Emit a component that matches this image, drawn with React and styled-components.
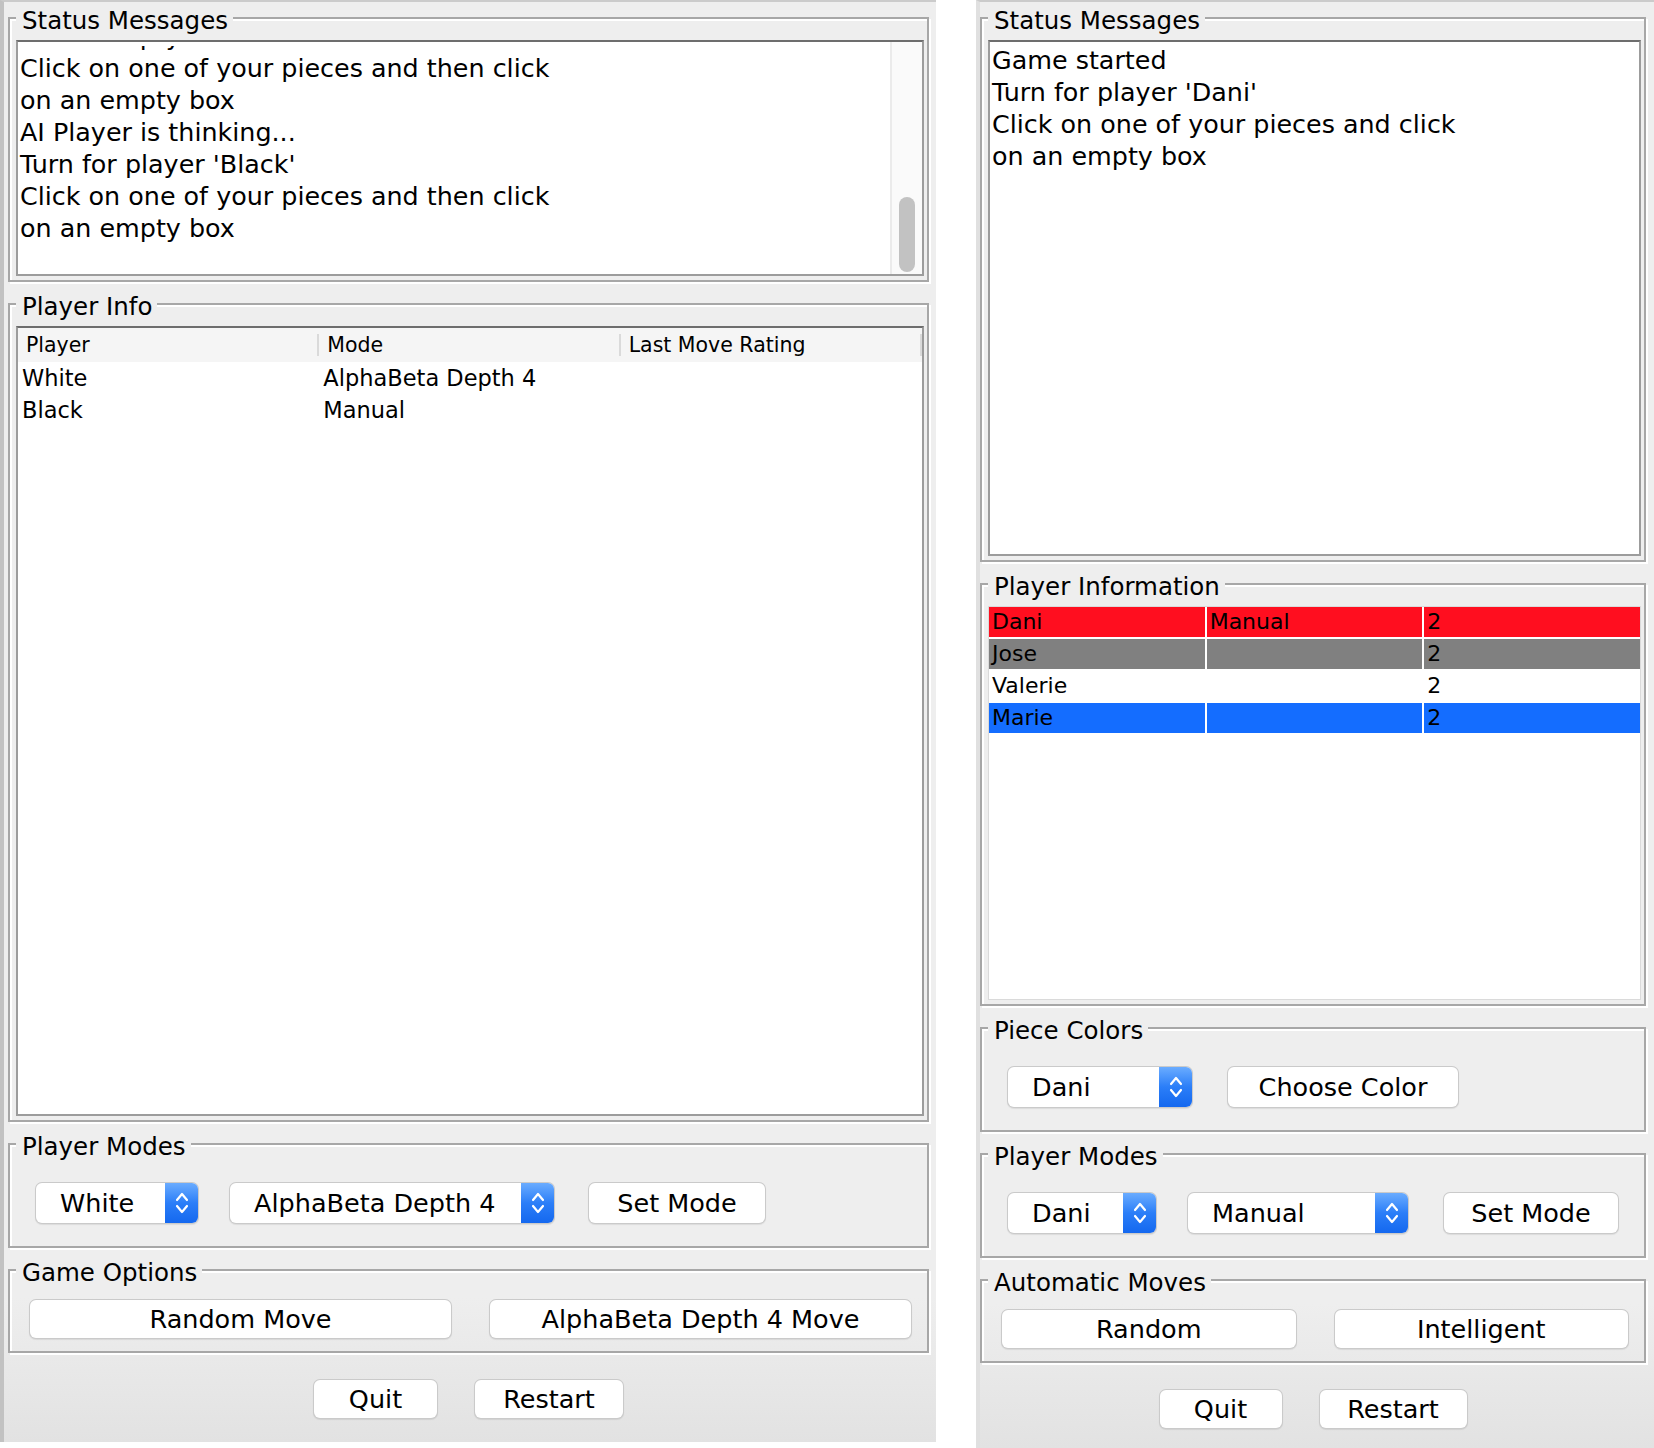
import React from "react";
import styled, { createGlobalStyle } from "styled-components";

const GlobalStyle = createGlobalStyle`
  * { box-sizing: border-box; }
  body {
    margin: 0;
    background: #ffffff;
    font-family: "DejaVu Sans", "Liberation Sans", sans-serif;
    color: #000;
  }
`;

const Screen = styled.div`
  display: flex;
  align-items: flex-start;
  gap: 40px;
  width: 1654px;
`;

const Window = styled.div`
  display: flex;
  flex-direction: column;
  gap: 6px;
  width: ${(p) => p.$w}px;
  height: ${(p) => p.$h}px;
  padding: 0 ${(p) => p.$pr}px 0 ${(p) => p.$pl}px;
  border-top: 2px solid #cbcbcb;
  border-left: 4px solid ${(p) => p.$edge};
  background: linear-gradient(#eeeeee 0%, #eeeeee 90%, #e2e2e2 100%);
`;

const Group = styled.fieldset`
  margin: 0;
  min-width: 0;
  padding: 6px 3px 4px 6px;
  border: 2px solid #a7a7a7;
  box-shadow: inset 2px 2px 0 #ffffff, 2px 2px 0 #ffffff;
`;

const Legend = styled.legend`
  margin: 0;
  padding: 6px 5px 0 6px;
  font-size: 24.5px;
  line-height: 26px;
  background: #eeeeee;
`;

const TextPane = styled.div`
  display: flex;
  height: ${(p) => p.$h}px;
  background: #ffffff;
  border: 2px solid #9c9c9c;
  border-top-color: #6d6d6d;
  overflow: hidden;
`;

/* viewport of the scrolled message list; starts a little below the frame */
const MessageClip = styled.div`
  flex: 1;
  margin-top: ${(p) => p.$inset}px;
  overflow: hidden;
`;

const Messages = styled.div`
  margin-top: ${(p) => p.$offset}px;
  padding: 1px 0 0 2px;
  font-size: 25.4px;
  line-height: 32px;
  white-space: pre;
`;

const ScrollTrack = styled.div`
  width: 32px;
  display: flex;
  flex-direction: column;
  justify-content: flex-end;
  align-items: center;
  padding: 2px 0;
  background: #fafafa;
  border-left: 2px solid #ebebeb;
`;

const ScrollThumb = styled.div`
  width: 16px;
  height: 75px;
  border-radius: 8px;
  background: #c2c2c2;
`;

const TablePane = styled.div`
  height: ${(p) => p.$h}px;
  background: #ffffff;
  border: ${(p) => (p.$light ? "1px solid #dadada" : "2px solid #9c9c9c")};
  border-top-color: ${(p) => (p.$light ? "#dadada" : "#6d6d6d")};
  overflow: hidden;
`;

const HeaderRow = styled.div`
  display: grid;
  grid-template-columns: repeat(3, 1fr);
  height: 34px;
  background: #f5f5f5;
`;

const HeaderCell = styled.div`
  display: flex;
  align-items: center;
  padding-left: 8px;
  font-size: 20.5px;
`;

const HeaderDivider = styled.span`
  margin-left: auto;
  width: 2px;
  height: 22px;
  background: #dadada;
`;

const InfoRow = styled.div`
  display: grid;
  grid-template-columns: repeat(3, 1fr);
  height: 32px;
  font-size: 22.5px;
  line-height: 32px;
`;

const InfoCell = styled.div`
  padding-left: 4px;
  white-space: nowrap;
`;

const ColorGrid = styled.div`
  display: grid;
  grid-template-columns: repeat(3, 1fr);
  gap: 2px;
`;

const ColorCell = styled.div`
  height: 30px;
  padding-left: 3px;
  font-size: 22px;
  line-height: 30px;
  background: ${(p) => p.$bg};
`;

const ControlRow = styled.div`
  display: flex;
  align-items: center;
  gap: 32px;
  padding: 17px 0 19px 20px;
`;

const ButtonGrid = styled.div`
  display: grid;
  grid-template-columns: 1fr 1fr;
  column-gap: 39px;
  padding: 8px 13px 9px 14px;
`;

const Footer = styled.div`
  display: flex;
  justify-content: center;
  gap: 38px;
  padding-top: 21px;
`;

const Combo = styled.div`
  display: flex;
  width: ${(p) => p.$w}px;
  height: 40px;
  border-radius: 6px;
  background: #ffffff;
  box-shadow: 0 0 0 1px #cacaca, 0 1px 1px 1px rgba(0, 0, 0, 0.08);
  overflow: hidden;
  font-size: 25.5px;
`;

const ComboText = styled.div`
  flex: 1;
  display: flex;
  align-items: center;
  padding-left: 24px;
  white-space: nowrap;
`;

const ComboArrow = styled.div`
  width: 33px;
  display: flex;
  align-items: center;
  justify-content: center;
  background: linear-gradient(#6aacff 0%, #2b7ef8 50%, #1468ef 100%);
`;

const Button = styled.button`
  width: ${(p) => (p.$w ? `${p.$w}px` : "auto")};
  height: ${(p) => p.$h}px;
  margin-left: ${(p) => p.$ml || 0}px;
  padding: 0;
  border: none;
  border-radius: 6px;
  background: #ffffff;
  box-shadow: 0 0 0 1px #cacaca, 0 1px 1px 1px rgba(0, 0, 0, 0.08);
  font-family: inherit;
  font-size: 25.5px;
  color: #000;
  white-space: nowrap;
`;

const Chevrons = () => (
  <svg width="14" height="26" viewBox="0 0 14 26" fill="none" stroke="#fff" strokeWidth="2.2" strokeLinecap="round" strokeLinejoin="round">
    <path d="M2 10 L7 4 L12 10" />
    <path d="M2 16 L7 22 L12 16" />
  </svg>
);

const ComboBox = ({ w, value }) => (
  <Combo $w={w}>
    <ComboText>{value}</ComboText>
    <ComboArrow>
      <Chevrons />
    </ComboArrow>
  </Combo>
);

const leftMessages = [
  "on an empty box",
  "Click on one of your pieces and then click",
  "on an empty box",
  "AI Player is thinking...",
  "Turn for player 'Black'",
  "Click on one of your pieces and then click",
  "on an empty box",
];

const rightMessages = [
  "Game started",
  "Turn for player 'Dani'",
  "Click on one of your pieces and click",
  "on an empty box",
];

const infoRows = [
  ["White", "AlphaBeta Depth 4", ""],
  ["Black", "Manual", ""],
];

const colorRows = [
  { cells: ["Dani", "Manual", "2"], bg: "#ff0e1f" },
  { cells: ["Jose", "", "2"], bg: "#808080" },
  { cells: ["Valerie", "", "2"], bg: "transparent" },
  { cells: ["Marie", "", "2"], bg: "#146dff" },
];

export default function App() {
  return (
    <>
      <GlobalStyle />
      <Screen>
        <Window $w={936} $h={1442} $pl={4} $pr={7} $edge="#c2c2c2">
          <Group>
            <Legend>Status Messages</Legend>
            <TextPane $h={236}>
              <MessageClip $inset={4}>
                <Messages $offset={-27}>
                  {leftMessages.map((m, i) => (
                    <div key={i}>{m}</div>
                  ))}
                </Messages>
              </MessageClip>
              <ScrollTrack>
                <ScrollThumb />
              </ScrollTrack>
            </TextPane>
          </Group>

          <Group>
            <Legend>Player Info</Legend>
            <TablePane $h={790}>
              <HeaderRow>
                {["Player", "Mode", "Last Move Rating"].map((h) => (
                  <HeaderCell key={h}>
                    {h}
                    <HeaderDivider />
                  </HeaderCell>
                ))}
              </HeaderRow>
              {infoRows.map((r) => (
                <InfoRow key={r[0]}>
                  {r.map((c, i) => (
                    <InfoCell key={i}>{c}</InfoCell>
                  ))}
                </InfoRow>
              ))}
            </TablePane>
          </Group>

          <Group>
            <Legend>Player Modes</Legend>
            <ControlRow>
              <ComboBox w={162} value="White" />
              <ComboBox w={324} value="AlphaBeta Depth 4" />
              <Button $w={176} $h={40} $ml={3}>Set Mode</Button>
            </ControlRow>
          </Group>

          <Group>
            <Legend>Game Options</Legend>
            <ButtonGrid>
              <Button $h={38}>Random Move</Button>
              <Button $h={38}>AlphaBeta Depth 4 Move</Button>
            </ButtonGrid>
          </Group>

          <Footer>
            <Button $w={123} $h={38}>Quit</Button>
            <Button $w={148} $h={38}>Restart</Button>
          </Footer>
        </Window>

        <Window $w={678} $h={1448} $pl={0} $pr={8} $edge="#e0e0e0">
          <Group>
            <Legend>Status Messages</Legend>
            <TextPane $h={516}>
              <MessageClip $inset={0}>
                <Messages $offset={1}>
                  {rightMessages.map((m, i) => (
                    <div key={i}>{m}</div>
                  ))}
                </Messages>
              </MessageClip>
            </TextPane>
          </Group>

          <Group>
            <Legend>Player Information</Legend>
            <TablePane $h={394} $light>
              <ColorGrid>
                {colorRows.map((r) =>
                  r.cells.map((c, i) => (
                    <ColorCell key={r.cells[0] + i} $bg={r.bg}>
                      {c}
                    </ColorCell>
                  ))
                )}
              </ColorGrid>
            </TablePane>
          </Group>

          <Group>
            <Legend>Piece Colors</Legend>
            <ControlRow>
              <ComboBox w={184} value="Dani" />
              <Button $w={230} $h={40} $ml={4}>Choose Color</Button>
            </ControlRow>
          </Group>

          <Group>
            <Legend>Player Modes</Legend>
            <ControlRow>
              <ComboBox w={148} value="Dani" />
              <ComboBox w={220} value="Manual" />
              <Button $w={174} $h={40} $ml={4}>Set Mode</Button>
            </ControlRow>
          </Group>

          <Group>
            <Legend>Automatic Moves</Legend>
            <ButtonGrid>
              <Button $h={38}>Random</Button>
              <Button $h={38}>Intelligent</Button>
            </ButtonGrid>
          </Group>

          <Footer>
            <Button $w={122} $h={38}>Quit</Button>
            <Button $w={147} $h={38}>Restart</Button>
          </Footer>
        </Window>
      </Screen>
    </>
  );
}
